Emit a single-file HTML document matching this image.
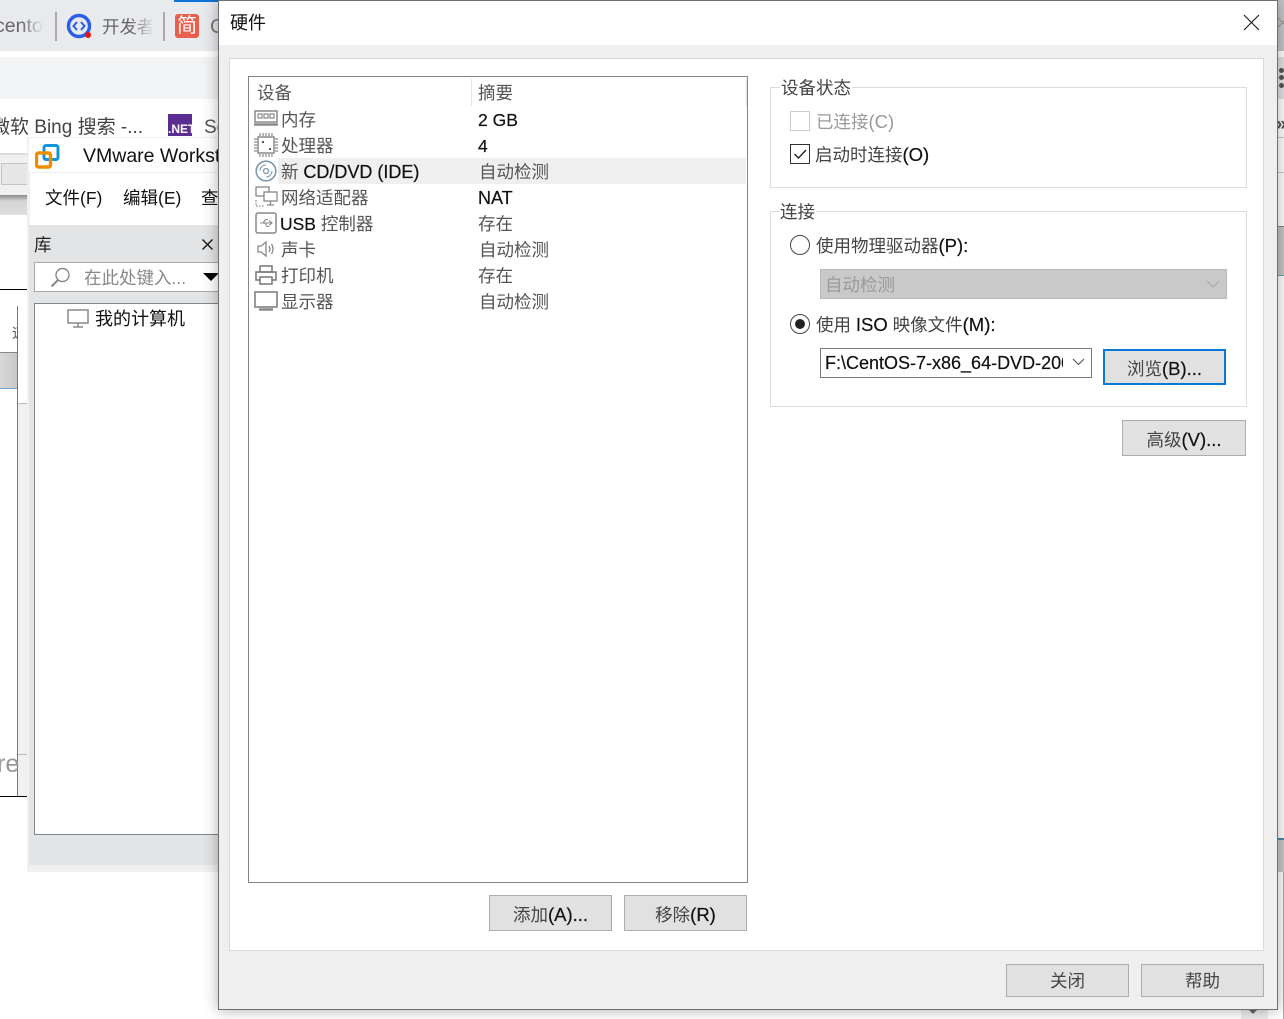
<!DOCTYPE html>
<html lang="zh"><head><meta charset="utf-8"><title>硬件</title>
<style>
html,body{margin:0;padding:0}
body{width:1284px;height:1019px;overflow:hidden;background:#fff;position:relative;font:17.5px/26px "Liberation Sans","Noto Sans CJK SC",sans-serif;color:#222}
div,span,svg{position:absolute;box-sizing:border-box}
.t{white-space:nowrap;height:26px;margin-top:1px}
.g{color:#555}
.btn{background:#e1e1e1;border:1px solid #adadad;text-align:center;color:#444}
.grp{border:1px solid #dcdcdc}
.leg{background:#fff;padding:0 1px;color:#444}
b{font-weight:normal;font-size:18.5px;color:#111;-webkit-text-stroke:.2px #111}
.l b{font-size:18px}
.fade{-webkit-mask-image:linear-gradient(90deg,#000 55%,transparent);mask-image:linear-gradient(90deg,#000 55%,transparent)}
</style></head><body>
<!-- browser background -->
<div style="left:0;top:0;width:1284px;height:51px;background:#e8eaed"></div>
<div style="left:0;top:57px;width:1284px;height:42px;background:#f1f3f4"></div>
<div style="left:174px;top:0;width:72px;height:2px;background:#0a74d6"></div>
<span class="t fade" style="left:-5px;top:12px;font-size:19.500px;color:#666;width:48px;overflow:hidden">cento</span>
<div style="left:55px;top:12px;width:2px;height:29px;background:#aaa"></div>
<svg style="left:66px;top:13px" width="27" height="27" viewBox="0 0 27 27"><circle cx="13" cy="13" r="10.5" fill="none" stroke="#2a5ee8" stroke-width="3.4"/><path d="M11 9l-3.500 4 3.500 4M15 9l3.500 4-3.500 4" fill="none" stroke="#2a5ee8" stroke-width="2"/><circle cx="22" cy="22" r="3" fill="#e81010"/></svg>
<span class="t fade" style="left:102px;top:13px;font-size:17.500px;color:#666;width:52px;overflow:hidden">开发者</span>
<div style="left:163px;top:12px;width:2px;height:29px;background:#aaa"></div>
<div style="left:175px;top:14px;width:24px;height:24px;border-radius:3px;background:#e8604c;color:#fff;font-size:20px;line-height:24px;text-align:center">简</div>
<span class="t" style="left:210px;top:13px;font-size:20px;color:#777">C</span>
<span class="t" style="left:-9px;top:114px;font-size:19px;color:#444">微软 Bing 搜索 -...</span>
<div style="left:168px;top:114px;width:24px;height:22px;background:#5c2d91;color:#fff;font:bold 12px/30px 'Liberation Sans',sans-serif;text-align:center;overflow:hidden">.NET</div>
<span class="t" style="left:204px;top:114px;font-size:19px;color:#555">So</span>
<!-- left fragments -->
<div style="left:0;top:153px;width:27px;height:42px;background:#f0f0f0;border-top:2px solid #ddd"></div>
<div style="left:1px;top:163px;width:27px;height:22px;background:#e6e6e6;border:1px solid #c4c4c4"></div>
<div style="left:0;top:195px;width:27px;height:20px;background:linear-gradient(#8a8a8a,#d4d4d4 30%,#dedede)"></div>
<div style="left:0;top:289px;width:27px;height:1px;background:#000"></div>
<div style="left:0;top:352px;width:17px;height:36px;background:linear-gradient(90deg,#d8d8d8,#c8c8c8);border-top:1px solid #888"></div>
<div style="left:0;top:388px;width:17px;height:1px;background:#6aa6d4"></div>
<div style="left:17px;top:306px;width:1px;height:490px;background:#777"></div>
<div style="left:18px;top:404px;width:9px;height:392px;background:#f0f0f0"></div>
<div style="left:18px;top:306px;width:9px;height:98px;background:#fff;border-bottom:1px solid #bbb"></div>
<div style="left:18px;top:754px;width:9px;height:1px;background:#bbb"></div>
<span class="t" style="left:12px;top:319px;font-size:14px;color:#555;width:6px;overflow:hidden">速</span>
<span class="t" style="left:-3px;top:750px;font-size:25px;color:#999">re</span>
<div style="left:0;top:796px;width:27px;height:1px;background:#000"></div>
<!-- right fragments -->
<div style="left:1277px;top:0;width:7px;height:51px;background:#c4c6c9"></div>
<svg style="left:1277px;top:17px" width="7" height="11"><path d="M1 1l9 9M1 10l9-9" stroke="#9a9a9a" stroke-width="1"/></svg>
<div style="left:1277px;top:57px;width:7px;height:42px;background:#e2e3e5"></div>
<div style="left:1279px;top:68px;width:5px;height:5px;border-radius:3px;background:#555"></div>
<div style="left:1279px;top:75px;width:5px;height:5px;border-radius:3px;background:#555"></div>
<div style="left:1279px;top:83px;width:5px;height:5px;border-radius:3px;background:#555"></div>
<span class="t" style="left:1276px;top:111px;font-size:19px;font-weight:bold;color:#555">»</span>
<div style="left:1277px;top:137px;width:7px;height:1px;background:#ccc"></div>
<div style="left:1277px;top:172px;width:7px;height:1px;background:#ccc"></div>
<div style="left:1277px;top:226px;width:7px;height:50px;background:#c6c6c6;border-top:1px solid #888;border-bottom:1px solid #6aa"></div>
<div style="left:1277px;top:838px;width:7px;height:2px;background:#4a86a8"></div>
<div style="left:1277px;top:840px;width:7px;height:32px;background:#c8c8c8"></div>
<div style="left:1283px;top:872px;width:1px;height:147px;background:#aaa"></div>
<div style="left:1241px;top:1009px;width:27px;height:10px;background:#ececec"></div>
<div style="left:1249px;top:1010px;width:0;height:0;border:4px solid transparent;border-top:4px solid #666"></div>
<!-- VMware window -->
<div style="left:27px;top:137px;width:200px;height:735px;background:#f0f0f0"></div>
<div style="left:29px;top:138px;width:200px;height:34px;background:#fff"></div>
<svg style="left:35px;top:144px" width="25" height="25" viewBox="0 0 25 25"><rect x="9" y="1.500" width="14" height="14" rx="2" fill="none" stroke="#1295d8" stroke-width="3"/><rect x="1.500" y="9" width="14" height="14" rx="2" fill="none" stroke="#f08c00" stroke-width="3.400"/></svg>
<span class="t" style="left:83px;top:142px;font-size:19.500px;color:#111">VMware Workstation</span>
<div style="left:30px;top:173px;width:200px;height:52px;background:#fff"></div>
<span class="t" style="left:45px;top:184px;color:#111">文件(F)</span>
<span class="t" style="left:123px;top:184px;color:#111">编辑(E)</span>
<span class="t" style="left:201px;top:184px;color:#111">查看</span>
<div style="left:29px;top:225px;width:200px;height:640px;background:#e3e4e6"></div>
<span class="t" style="left:34px;top:231px;color:#222">库</span>
<svg style="left:201px;top:238px" width="13" height="13"><path d="M1.500 1.500l10 10M11.500 1.500l-10 10" stroke="#111" stroke-width="1.300"/></svg>
<div style="left:34px;top:262px;width:200px;height:30px;background:#fff;border:1px solid #aaa"></div>
<svg style="left:49px;top:266px" width="23" height="23"><circle cx="13.500" cy="9" r="6.500" fill="none" stroke="#888" stroke-width="1.400"/><path d="M9 14l-6.500 6.500" stroke="#888" stroke-width="2"/></svg>
<span class="t" style="left:84px;top:264px;color:#888">在此处键入...</span>
<div style="left:203px;top:273px;width:0;height:0;border:8px solid transparent;border-top:8px solid #000"></div>
<div style="left:34px;top:303px;width:200px;height:532px;background:#fff;border:1px solid #80868b"></div>
<svg style="left:67px;top:309px" width="22" height="20"><rect x="1" y="1" width="20" height="13" fill="none" stroke="#888" stroke-width="1.500"/><path d="M11 14v4M6 18h10" stroke="#888" stroke-width="1.500"/></svg>
<span class="t" style="left:95px;top:305px;font-size:18px;color:#111">我的计算机</span>
<!-- dialog -->
<div style="left:218px;top:0;width:1060px;height:1010px;background:#efefef;border:1px solid #6e7072;box-shadow:0 0 14px rgba(0,0,0,.32)"></div>
<div style="left:219px;top:1px;width:1058px;height:44px;background:#fff"></div>
<span class="t" style="left:230px;top:9px;font-size:18px;color:#111">硬件</span>
<svg style="left:1243px;top:14px" width="17" height="17"><path d="M1 1l15 15M16 1L1 16" stroke="#222" stroke-width="1.200"/></svg>
<div style="left:229px;top:58px;width:1035px;height:893px;background:#fff;border:1px solid #d9d9d9"></div>
<!-- list -->
<div style="left:248px;top:76px;width:500px;height:807px;background:#fff;border:1px solid #80868b"></div>
<div style="left:471px;top:79px;width:1px;height:27px;background:#e2e2e2"></div>
<div style="left:746px;top:79px;width:1px;height:27px;background:#e2e2e2"></div>
<div style="left:278px;top:158px;width:468px;height:26px;background:#efefef"></div>
<span class="t g" style="left:257px;top:79px">设备</span><span class="t g" style="left:478px;top:79px">摘要</span>
<span class="t g" style="left:281px;top:106px">内存</span><span class="t" style="left:478px;top:106px;color:#111"><b style="font-size:17.5px">2 GB</b></span>
<span class="t g" style="left:281px;top:132px">处理器</span><span class="t" style="left:478px;top:132px;color:#111"><b style="font-size:17.5px">4</b></span>
<span class="t g l" style="left:281px;top:158px">新 <b>CD/DVD (IDE)</b></span><span class="t g" style="left:479px;top:158px">自动检测</span>
<span class="t g" style="left:281px;top:184px">网络适配器</span><span class="t l" style="left:478px;top:184px;color:#111"><b>NAT</b></span>
<span class="t g" style="left:280px;top:210px"><b style="font-size:17.5px">USB</b> 控制器</span><span class="t g" style="left:478px;top:210px">存在</span>
<span class="t g" style="left:281px;top:236px">声卡</span><span class="t g" style="left:479px;top:236px">自动检测</span>
<span class="t g" style="left:281px;top:262px">打印机</span><span class="t g" style="left:478px;top:262px">存在</span>
<span class="t g" style="left:281px;top:288px">显示器</span><span class="t g" style="left:479px;top:288px">自动检测</span>
<!-- icons -->
<svg style="left:254px;top:110px" width="24" height="18" fill="none" stroke="#8a8a8a" stroke-width="1.500"><rect x="1" y="1" width="22" height="11"/><path d="M0 14.500h24" stroke-width="2.500"/><path d="M4 4h4v4H4zM10 4h4v4h-4zM16 4h4v4h-4z" stroke-width="1.200"/></svg>
<svg style="left:254px;top:133px" width="24" height="24" fill="none" stroke="#8a8a8a"><rect x="4" y="4" width="16" height="16" stroke-width="1.500"/><path d="M6 0v3M9 0v3M12 0v3M15 0v3M18 0v3M6 21v3M9 21v3M12 21v3M15 21v3M18 21v3M0 6h3M0 9h3M0 12h3M0 15h3M0 18h3M21 6h3M21 9h3M21 12h3M21 15h3M21 18h3" stroke-width="1.200"/><rect x="8" y="8" width="2" height="2" fill="#555" stroke="none"/><rect x="15" y="15" width="2" height="2" fill="#555" stroke="none"/></svg>
<svg style="left:255px;top:160px" width="22" height="22" fill="none" stroke="#7d97ab"><circle cx="11" cy="11" r="9.800" stroke-width="1.600"/><circle cx="11" cy="11" r="2.500" stroke-width="1.300"/><path d="M5 11a6 6 0 0 1 6-6M17 11a6 6 0 0 1-6 6" stroke-width="1"/></svg>
<svg style="left:255px;top:186px" width="23" height="23" fill="none" stroke="#888" stroke-width="1.300"><rect x="1" y="1" width="13" height="9"/><rect x="9" y="6" width="13" height="9" fill="#fff"/><path d="M15.500 15v4M12 19h7"/><path d="M1 14v6h9" stroke-dasharray="1.500 1.500"/></svg>
<svg style="left:255px;top:212px" width="22" height="22" fill="none" stroke="#888"><rect x="1" y="1" width="20" height="20" rx="2" stroke-width="1.500"/><path d="M5 11h12M14 8.500l3 2.500-3 2.500M8 11l2.500-3.500H13M10 11l2 3.500h2" stroke-width="1.100"/></svg>
<svg style="left:257px;top:240px" width="18" height="18" fill="none" stroke="#888" stroke-width="1.300"><path d="M1 6h3l5-4v14l-5-4H1z"/><path d="M12 6q2 3 0 6M14.500 4q3 5 0 10"/></svg>
<svg style="left:255px;top:265px" width="22" height="21" fill="none" stroke="#777" stroke-width="1.500"><rect x="5" y="1" width="12" height="6"/><path d="M5 15H1V7h20v8h-4"/><rect x="5" y="12" width="12" height="7"/></svg>
<svg style="left:254px;top:291px" width="24" height="20" fill="none" stroke="#888"><rect x="1" y="1" width="22" height="15" stroke-width="1.700"/><path d="M5 18.500h14" stroke-width="2.500"/></svg>
<!-- list buttons -->
<div class="btn" style="left:489px;top:895px;width:123px;height:36px;line-height:37px">添加<b>(A)...</b></div>
<div class="btn" style="left:624px;top:895px;width:123px;height:36px;line-height:37px">移除<b>(R)</b></div>
<div class="btn" style="left:1006px;top:964px;width:123px;height:33px;line-height:33px">关闭</div>
<div class="btn" style="left:1141px;top:964px;width:123px;height:33px;line-height:33px">帮助</div>
<!-- device status -->
<div class="grp" style="left:770px;top:87px;width:477px;height:101px"></div>
<span class="t leg" style="left:780px;top:74px">设备状态</span>
<div style="left:790px;top:111px;width:20px;height:20px;border:1px solid #ccc;background:#fff"></div>
<span class="t" style="left:816px;top:108px;color:#999">已连接<span style="position:static;font-size:18.500px">(C)</span></span>
<div style="left:790px;top:144px;width:20px;height:20px;border:1px solid #333;background:#fff"></div>
<svg style="left:790px;top:144px" width="20" height="20"><path d="M4.500 10l4 4 7.500-8" fill="none" stroke="#222" stroke-width="1.400"/></svg>
<span class="t" style="left:815px;top:141px;color:#444">启动时连接<b>(O)</b></span>
<!-- connection -->
<div class="grp" style="left:770px;top:211px;width:477px;height:196px"></div>
<span class="t leg" style="left:779px;top:198px">连接</span>
<div style="left:790px;top:235px;width:20px;height:20px;border:1px solid #444;border-radius:50%;background:#fff"></div>
<span class="t" style="left:816px;top:232px;color:#444">使用物理驱动器<b>(P):</b></span>
<div style="left:820px;top:269px;width:407px;height:30px;background:#c9c9c9;border:1px solid #b8b8b8"></div>
<span class="t" style="left:825px;top:271px;color:#9a9a9a">自动检测</span>
<svg style="left:1206px;top:279px" width="14" height="10"><path d="M1 2l6 6 6-6" fill="none" stroke="#a8a8a8" stroke-width="1.100"/></svg>
<div style="left:790px;top:314px;width:20px;height:20px;border:1px solid #444;border-radius:50%;background:#fff"></div>
<div style="left:795px;top:319px;width:10px;height:10px;border-radius:50%;background:#222"></div>
<span class="t" style="left:816px;top:311px;color:#444">使用 <b>ISO</b> 映像文件<b>(M):</b></span>
<div style="left:820px;top:348px;width:272px;height:30px;background:#fff;border:1px solid #7a7a7a"></div>
<div style="left:825px;top:350px;width:238px;height:26px;overflow:hidden;color:#111"><span class="t" style="left:0;top:0;margin-top:0"><b style="font-size:18px">F:\CentOS-7-x86_64-DVD-2009.iso</b></span></div>
<svg style="left:1072px;top:357px" width="13" height="9"><path d="M1 2l5.500 5.500L12 2" fill="none" stroke="#555" stroke-width="1.100"/></svg>
<div class="btn" style="left:1103px;top:349px;width:123px;height:36px;border:2px solid #0a78d7;line-height:35px">浏览<b>(B)...</b></div>
<div class="btn" style="left:1122px;top:420px;width:124px;height:36px;line-height:37px">高级<b>(V)...</b></div>
</body></html>
